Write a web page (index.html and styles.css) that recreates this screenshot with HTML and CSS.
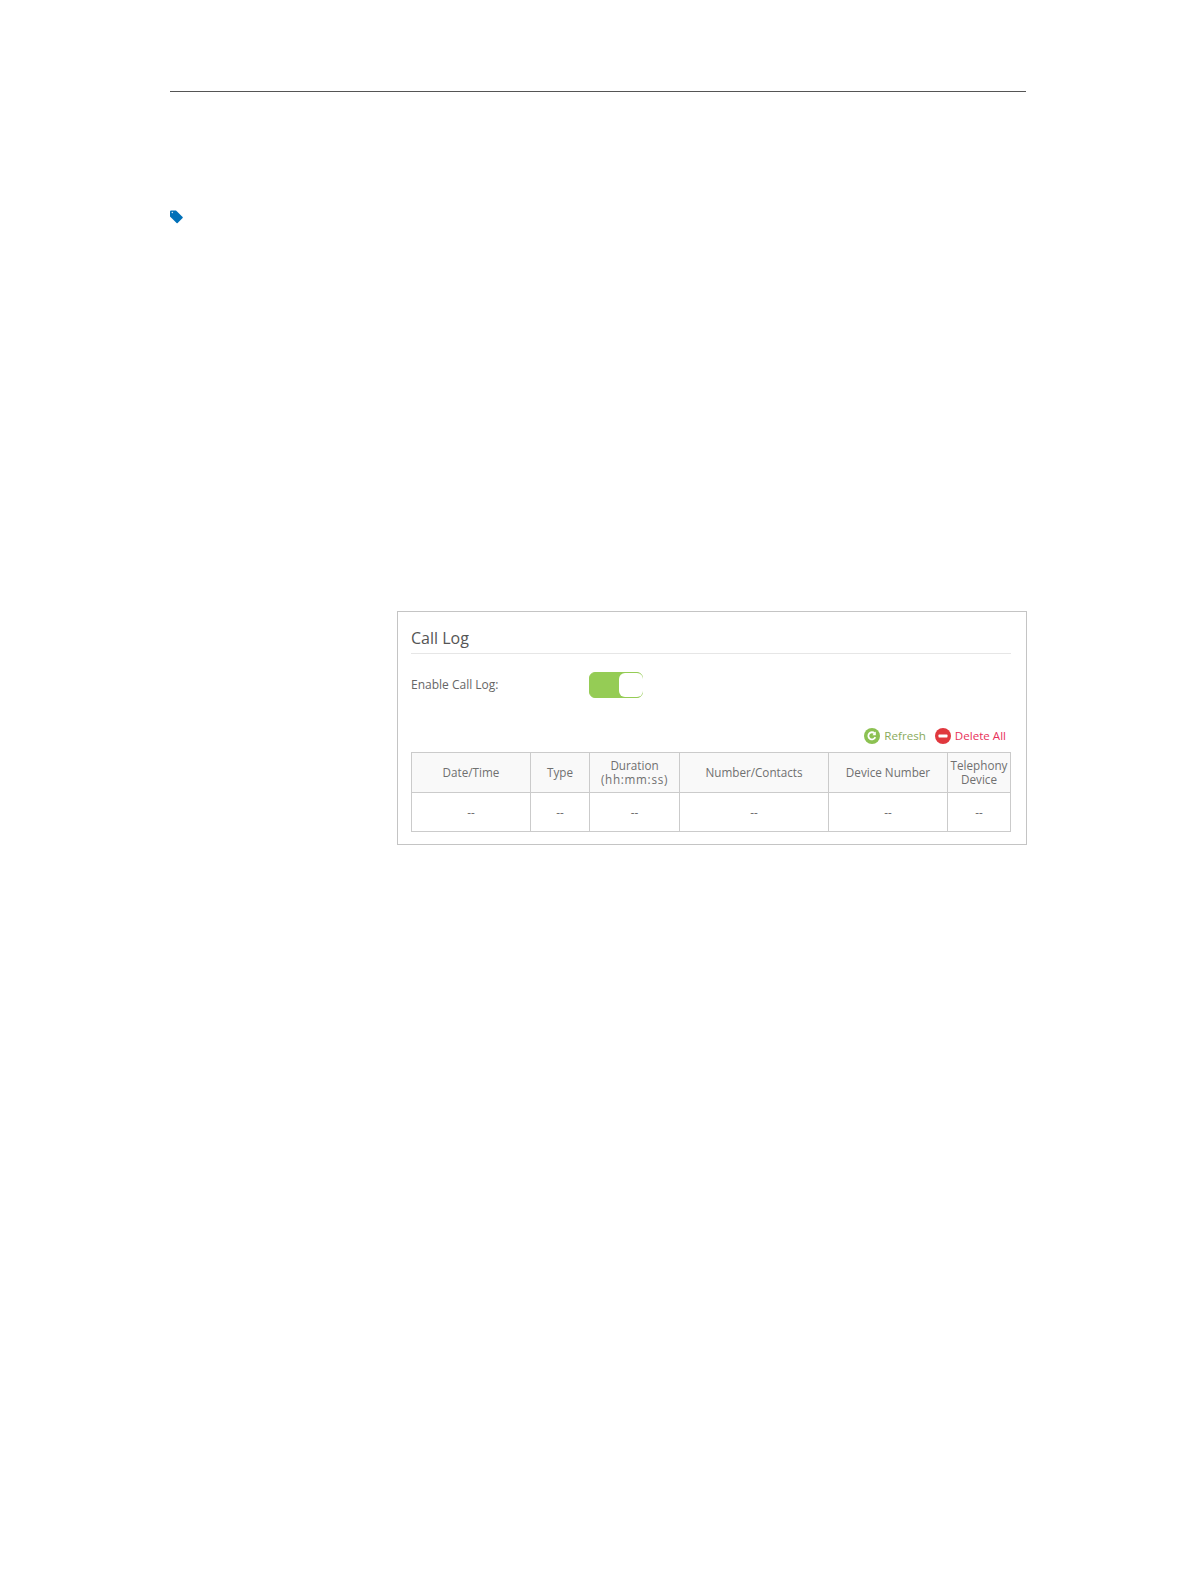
FILE: index.html
```html
<!DOCTYPE html>
<html lang="en">
<head>
<meta charset="utf-8">
<title>Call Log</title>
<link rel="stylesheet" href="styles.css">
</head>
<body>
<main class="page">
  <hr class="rule">
  <svg class="tag" width="13" height="14" viewBox="0.4 0.4 13.4 13.6"><path fill="#0070b8" d="M0.4 1.6 Q0.4 0.4 1.6 0.4 L6.6 0.4 L13.4 7.2 Q13.8 7.8 13.4 8.3 L8.3 13.4 Q7.8 13.8 7.2 13.4 L0.4 6.6 Z"/><circle cx="2.8" cy="2.6" r="0.8" fill="#cfe4f3"/></svg>
  <section class="panel">
    <h2 class="title">Call Log</h2>
    <div class="enable">
      <span class="enable-label">Enable Call Log:</span>
      <span class="toggle"><span class="knob"></span></span>
    </div>
    <div class="actions">
      <span class="action refresh">
        <svg width="16" height="16" viewBox="0 0 16 16"><circle cx="8" cy="8" r="8" fill="#8cc152"/><path d="M11.3 9.2 A3.6 3.6 0 1 1 10.6 5.4" fill="none" stroke="#fff" stroke-width="1.8"/><path d="M11.8 3.6 L11.8 7.2 L8.4 7.2 Z" fill="#fff"/></svg>
        <span class="action-text">Refresh</span>
      </span>
      <span class="action delete">
        <svg width="16" height="16" viewBox="0 0 16 16"><circle cx="8" cy="8" r="8" fill="#e0383e"/><rect x="3.5" y="6.6" width="9" height="2.8" rx="0.6" fill="#fff"/></svg>
        <span class="action-text">Delete All</span>
      </span>
    </div>
    <table class="log">
      <colgroup>
        <col class="c1"><col class="c2"><col class="c3"><col class="c4"><col class="c5"><col class="c6">
      </colgroup>
      <thead>
        <tr>
          <th>Date/Time</th>
          <th>Type</th>
          <th>Duration<br><span class="units">(hh:mm:ss)</span></th>
          <th>Number/Contacts</th>
          <th>Device Number</th>
          <th>Telephony<br>Device</th>
        </tr>
      </thead>
      <tbody>
        <tr><td>--</td><td>--</td><td>--</td><td>--</td><td>--</td><td>--</td></tr>
      </tbody>
    </table>
  </section>
</main>
</body>
</html>
```
FILE: styles.css
```css
* { box-sizing: border-box; }
html, body { margin: 0; padding: 0; background: #fff; }
body { font-family: "Open Sans", "Liberation Sans", sans-serif; color: #555; }
.page { width: 1196px; height: 1582px; padding: 91px 170px 0; display: flex; flex-direction: column; }
.rule { width: 856px; height: 1px; margin: 0; border: 0; background: #555; }
.tag { display: block; margin-top: 118px; }
.panel { width: 630px; height: 234px; margin-top: 387px; margin-left: 227px; padding: 0 15px 0 13px; border: 1px solid #c4c4c4; background: #fff; }
.title { height: 42px; margin: 0; padding-top: 14px; font-size: 16px; line-height: 24px; font-weight: 400; color: #555; border-bottom: 1px solid #e6e6e6; }
.enable { display: flex; align-items: center; height: 26px; margin-top: 18px; }
.enable-label { width: 178px; padding-bottom: 2px; font-size: 12px; color: #666; }
.toggle { display: block; width: 54px; height: 26px; background: #95cc55; border: 1px solid #95cc55; border-radius: 6px; padding-left: 29px; }
.knob { display: block; width: 24px; height: 24px; background: #fff; border-radius: 6px; }
.actions { display: flex; justify-content: flex-end; align-items: center; gap: 9px; height: 20px; margin-top: 28px; padding-right: 5px; font-size: 11.6px; }
.action { display: flex; align-items: center; gap: 4px; }
.action-text { padding-bottom: 2px; }
.refresh { color: #8aab5c; }
.delete { color: #e8305a; }
.log { width: 599px; margin-top: 6px; border-collapse: collapse; table-layout: fixed; font-size: 11.7px; color: #707070; }
.c1 { width: 119px; } .c2 { width: 59px; } .c3 { width: 90px; } .c4 { width: 149px; } .c5 { width: 119px; } .c6 { width: 63px; }
.log th, .log td { border: 1px solid #cbcbcb; text-align: center; font-weight: 400; line-height: 14px; }
.log th { height: 40px; padding: 0 0 2px; background: #f9f9f9; }
.log td { height: 39px; padding: 0; background: #fff; }
.units { letter-spacing: 0.7px; }
```
